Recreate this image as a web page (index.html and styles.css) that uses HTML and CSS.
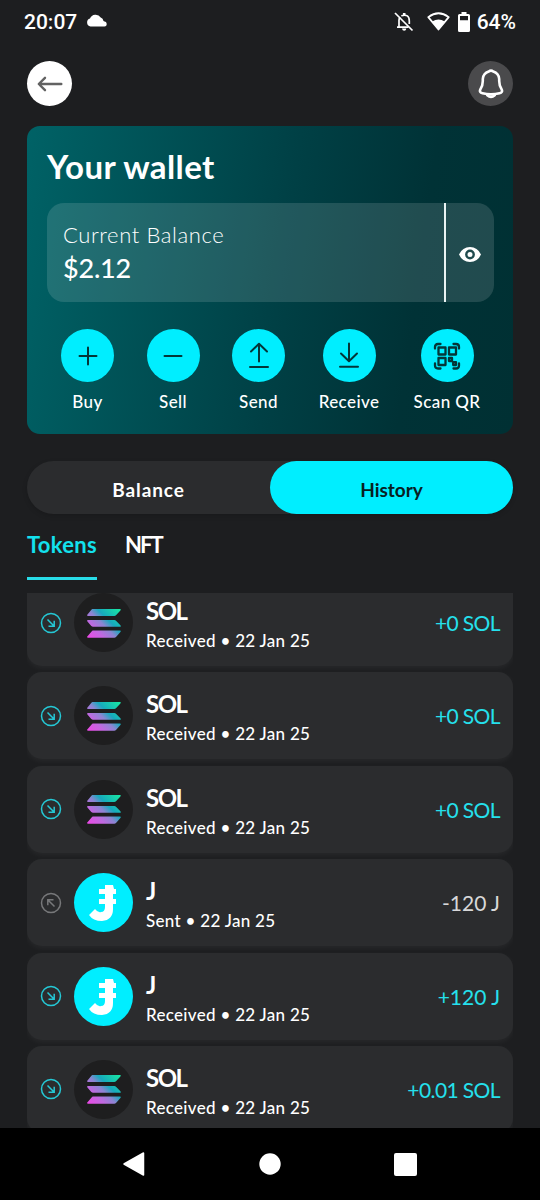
FILE: index.html
```html
<!DOCTYPE html>
<html lang="en">
<head>
    <meta charset="UTF-8">
    <meta name="viewport" content="width=device-width, initial-scale=1.0">
    <title>Your wallet</title>
    <link rel="stylesheet" href="styles.css">
</head>
<body>
    <!-- Shared icons -->
    <svg class="sprite" width="0" height="0">
        <defs>
            <linearGradient id="solGradient" gradientUnits="userSpaceOnUse" x1="3" y1="31" x2="33" y2="1">
                <stop offset="0" stop-color="#ee48e6"/>
                <stop offset="0.28" stop-color="#c069e0"/>
                <stop offset="0.48" stop-color="#8a86d2"/>
                <stop offset="0.64" stop-color="#17a9bd"/>
                <stop offset="1" stop-color="#18e6a4"/>
            </linearGradient>
        </defs>
        <symbol id="sol" viewBox="0 0 36 30">
            <path fill="url(#solGradient)" d="M6.4 1H33.6Q35.6 1 34.4 2.4L30 7.2Q29.3 8 28.3 8H2.2Q.3 8 1.5 6.6L5.4 1.8Q5.9 1 6.4 1ZM2.2 12H28.3Q29.3 12 30 12.8L34.4 17.3Q35.6 18.8 33.6 18.8H7Q6 18.8 5.3 18L1.4 13.4Q.3 12 2.2 12ZM6.8 22.5H33.6Q35.6 22.5 34.4 23.9L30 28.9Q29.3 29.7 28.3 29.7H2.2Q.3 29.7 1.5 28.3L5.8 23.2Q6.3 22.5 6.8 22.5Z"/>
        </symbol>
        <symbol id="jcoin" viewBox="0 0 59 59">
            <path fill="#fff" d="M31 12H39L40 16H42V21H39V26H42V31H39V36Q39 47 28 48Q19 48 15 42L21 36Q24 40 27 39Q31 39 31 34V31H25V26H31V21H25V16H31Z"/>
        </symbol>
        <symbol id="in" viewBox="0 0 22 22">
            <circle cx="11" cy="11" r="9.5"/>
            <path d="M7.5 7.5L14 14M14.2 8.8V14.2H8.5"/>
        </symbol>
        <symbol id="out" viewBox="0 0 22 22">
            <circle cx="11" cy="11" r="9.5"/>
            <path d="M14.5 14.5L8 8M7.8 13.2V7.8H13.5"/>
        </symbol>
    </svg>

    <div class="status-bar">
        <div class="status-left">
            <span>20:07</span>
            <svg width="22" height="13" viewBox="0 0 22 13"><path fill="#fff" d="M4.5 12.4A4 4 0 0 1 4 4.6A6 6 0 0 1 14.7 3.6A4.5 4.5 0 0 1 17.5 7A2.8 2.8 0 0 1 17.8 12.4Z M16 7.4H18A2.5 2.5 0 0 1 18.4 12.4H16Z"/></svg>
        </div>
        <div class="status-right">
            <svg class="mute" width="20" height="20" viewBox="0 0 20 20" fill="none" stroke="#fff" stroke-width="1.7">
                <path d="M1 1L18.5 18.5"/>
                <path d="M5 15V8.2Q5 6.6 6 5.3M3 15.2H14.5M7.3 3.8Q15.3 1.4 15.3 9V12"/>
                <path d="M10.2 1V3.5" stroke-width="2.6"/>
                <path fill="#fff" stroke="none" d="M8 16.5H12.4Q12 18.8 10.2 18.8Q8.4 18.8 8 16.5Z"/>
            </svg>
            <svg class="wifi" width="23" height="20" viewBox="0 0 23 20">
                <path d="M1.3 5.1Q11.5 -2.6 21.7 5.1L11.5 17.5Z" fill="none" stroke="#fff" stroke-width="1.8" stroke-linejoin="round"/>
                <path d="M5.2 9.4Q11.5 5.6 17.8 9.4L11.5 17.5Z" fill="#fff"/>
            </svg>
            <svg class="battery" width="12" height="20" viewBox="0 0 12 20">
                <path fill="#fff" fill-rule="evenodd" d="M3.5 0H8.5V2H10.5Q12 2 12 3.5V18.5Q12 20 10.5 20H1.5Q0 20 0 18.5V3.5Q0 2 1.5 2H3.5ZM2 4V8.3H10V4Z"/>
            </svg>
            <span>64%</span>
        </div>
    </div>

    <div class="header">
        <button class="back-btn">
            <svg width="26" height="16" viewBox="0 0 26 16" fill="none" stroke="#626262" stroke-width="2.4" stroke-linecap="round" stroke-linejoin="round"><path d="M24.3 8H2M8 1.8L1.8 8L8 14.2"/></svg>
        </button>
        <button class="bell-btn">
            <svg width="26" height="32" viewBox="0 0 26 32" fill="none" stroke="#fff" stroke-width="2.6" stroke-linecap="round" stroke-linejoin="round">
                <path d="M4.8 13V11Q5.3 5.4 10.7 3.6Q13 1.5 15.3 3.6Q20.7 5.4 21.2 11V13Q21.2 18 23.7 21.5Q25 24.5 21.5 25.3Q13 27.5 4.5 25.3Q1 24.5 2.3 21.5Q4.8 18 4.8 13Z"/>
                <path d="M9.3 27.3Q13 30.5 16.7 27.3"/>
            </svg>
        </button>
    </div>

    <div class="wallet-card">
        <h1>Your wallet</h1>
        <div class="balance-box">
            <div class="balance-info">
                <div class="balance-label">Current Balance</div>
                <div class="balance-value">$2.12</div>
            </div>
            <div class="balance-eye">
                <svg width="22" height="15" viewBox="0 0 22 15"><path fill="#fff" d="M0 7.5Q3.5 0 11 0T22 7.5Q18.5 15 11 15T0 7.5Z"/><circle cx="11" cy="7.5" r="3.7" fill="#fff" stroke="#204b4e" stroke-width="2.4"/></svg>
            </div>
        </div>
        <div class="actions">
            <div class="action">
                <div class="action-icon"><svg width="28" height="28" viewBox="0 0 28 28"><path d="M14 5.5V22.5M5.5 14H22.5"/></svg></div>
                <span>Buy</span>
            </div>
            <div class="action">
                <div class="action-icon"><svg width="28" height="28" viewBox="0 0 28 28"><path d="M5.5 14H22.5"/></svg></div>
                <span>Sell</span>
            </div>
            <div class="action">
                <div class="action-icon"><svg width="28" height="28" viewBox="0 0 28 28"><path d="M14 19.5V2M6 9.5L14 1.8L22 9.5M5 25H23"/></svg></div>
                <span>Send</span>
            </div>
            <div class="action receive">
                <div class="action-icon"><svg width="28" height="28" viewBox="0 0 28 28"><path d="M14 1.5V19M6 11.5L14 19.2L22 11.5M5 24.8H23"/></svg></div>
                <span>Receive</span>
            </div>
            <div class="action scan">
                <div class="action-icon"><svg width="28" height="28" viewBox="0 0 28 28"><path d="M2 6.5V5Q2 2 5 2H7.5M20.5 2H23Q26 2 26 5V6.5M26 21.5V23.5Q26 26.5 23 26.5H20.5M7.5 26.5H5Q2 26.5 2 23.5V21.5M5.5 5.5H12.5V12.5H5.5ZM16 5.5H23V12.5H16ZM5.5 16H12.5V23H5.5ZM16 16H19V19H16ZM20.2 20.2H23V23H20.2ZM19 19L20.5 20.5"/></svg></div>
                <span>Scan QR</span>
            </div>
        </div>
    </div>

    <div class="switch">
        <div class="switch-item">Balance</div>
        <div class="switch-item active">History</div>
    </div>

    <div class="tabs">
        <div class="tab active">Tokens</div>
        <div class="tab nft">NFT</div>
    </div>

    <div class="history">
        <div class="tx">
            <svg class="direction"><use href="#in"/></svg>
            <div class="coin"><svg width="36" height="30"><use href="#sol"/></svg></div>
            <div class="tx-info">
                <div class="tx-name">SOL</div>
                <div class="tx-date">Received • 22 Jan 25</div>
            </div>
            <div class="amount">+0 SOL</div>
        </div>
        <div class="tx">
            <svg class="direction"><use href="#in"/></svg>
            <div class="coin"><svg width="36" height="30"><use href="#sol"/></svg></div>
            <div class="tx-info">
                <div class="tx-name">SOL</div>
                <div class="tx-date">Received • 22 Jan 25</div>
            </div>
            <div class="amount">+0 SOL</div>
        </div>
        <div class="tx">
            <svg class="direction"><use href="#in"/></svg>
            <div class="coin"><svg width="36" height="30"><use href="#sol"/></svg></div>
            <div class="tx-info">
                <div class="tx-name">SOL</div>
                <div class="tx-date">Received • 22 Jan 25</div>
            </div>
            <div class="amount">+0 SOL</div>
        </div>
        <div class="tx sent">
            <svg class="direction"><use href="#out"/></svg>
            <div class="coin j"><svg width="59" height="59"><use href="#jcoin"/></svg></div>
            <div class="tx-info">
                <div class="tx-name">J</div>
                <div class="tx-date">Sent • 22 Jan 25</div>
            </div>
            <div class="amount j-amount">-120 J</div>
        </div>
        <div class="tx">
            <svg class="direction"><use href="#in"/></svg>
            <div class="coin j"><svg width="59" height="59"><use href="#jcoin"/></svg></div>
            <div class="tx-info">
                <div class="tx-name">J</div>
                <div class="tx-date">Received • 22 Jan 25</div>
            </div>
            <div class="amount j-amount">+120 J</div>
        </div>
        <div class="tx">
            <svg class="direction"><use href="#in"/></svg>
            <div class="coin"><svg width="36" height="30"><use href="#sol"/></svg></div>
            <div class="tx-info">
                <div class="tx-name">SOL</div>
                <div class="tx-date">Received • 22 Jan 25</div>
            </div>
            <div class="amount">+0.01 SOL</div>
        </div>
    </div>

    <div class="nav-bar">
        <svg width="22" height="24" viewBox="0 0 22 24"><path fill="#fff" stroke="#fff" stroke-width="1.5" stroke-linejoin="round" d="M1 12L20.5 1V23Z"/></svg>
        <svg width="22" height="22" viewBox="0 0 22 22"><circle cx="11" cy="11" r="10.7" fill="#fff"/></svg>
        <svg width="23" height="23" viewBox="0 0 23 23"><rect width="23" height="23" rx="2" fill="#fff"/></svg>
    </div>
</body>
</html>
```
FILE: styles.css
```css
* {
    box-sizing: border-box;
}
body {
    margin: 0;
    height: 1200px;
    background-color: #1d1e20;
    color: white;
    font-family: Lato, sans-serif;
    display: flex;
    flex-direction: column;
    overflow: hidden;
}
svg {
    display: block;
    flex-shrink: 0;
}
.sprite {
    position: absolute;
}
button {
    border: none;
    padding: 0;
}

/* Status bar */
.status-bar {
    height: 44px;
    padding: 0 24px;
    display: flex;
    justify-content: space-between;
    align-items: center;
    font-family: Roboto, sans-serif;
    font-size: 21px;
    font-weight: 500;
}
.status-left, .status-right {
    display: flex;
    align-items: center;
}
.status-left {
    gap: 9px;
}
.status-left svg {
    margin-top: -3px;
}
.mute {
    margin-right: 13px;
}
.wifi {
    margin-right: 8px;
}
.battery {
    margin-right: 7px;
}

/* Header */
.header {
    margin: 17px 27px 20px;
    display: flex;
    justify-content: space-between;
}
.back-btn, .bell-btn {
    width: 45px;
    height: 45px;
    border-radius: 50%;
    display: flex;
    align-items: center;
    justify-content: center;
    background-color: white;
}
.bell-btn {
    background-color: #4a4a4c;
}

/* Wallet card */
.wallet-card {
    height: 308px;
    margin: 0 27px;
    padding: 19px 19px 0 20px;
    border-radius: 13px;
    background: linear-gradient(98deg, #006266 0%, #004045 52%, #003236 78%, #003033 100%);
}
h1 {
    margin: 0;
    height: 58px;
    line-height: 42px;
    font-size: 33px;
    font-weight: 700;
    letter-spacing: 0.4px;
}
.balance-box {
    height: 99px;
    border-radius: 17px;
    background-color: rgba(255, 255, 255, 0.13);
    display: flex;
}
.balance-info {
    flex: 1;
    padding: 17px 16px;
}
.balance-label {
    font-size: 22px;
    line-height: 29px;
    font-weight: 300;
    letter-spacing: 0.6px;
}
.balance-value {
    margin-top: 2px;
    font-size: 27px;
    line-height: 34px;
    font-weight: 500;
    letter-spacing: -0.2px;
}
.balance-eye {
    width: 50px;
    border-left: 2px solid #e9f3f3;
    display: flex;
    align-items: center;
    justify-content: center;
    padding-top: 3px;
}
.actions {
    margin-top: 27px;
    padding: 0 13px 0 14px;
    display: flex;
    justify-content: space-between;
}
.action {
    width: 53px;
    display: flex;
    flex-direction: column;
    align-items: center;
    font-size: 17px;
    line-height: 22px;
    font-weight: 500;
    letter-spacing: 0.4px;
    white-space: nowrap;
}
.receive {
    width: 63px;
}
.scan {
    width: 68px;
}
.action-icon {
    width: 53px;
    height: 53px;
    margin-bottom: 9px;
    border-radius: 50%;
    background-color: #00eeff;
    display: flex;
    align-items: center;
    justify-content: center;
}
.action-icon path {
    fill: none;
    stroke: #043638;
    stroke-width: 2;
    stroke-linecap: round;
    stroke-linejoin: round;
}
.scan .action-icon path {
    stroke-width: 2.3;
}

/* Balance / History switch */
.switch {
    height: 53px;
    margin: 27px 27px 0;
    border-radius: 27px;
    background-color: #2b2c2e;
    box-shadow: 0 2px 5px rgba(0, 0, 0, 0.15);
    display: flex;
}
.switch-item {
    flex: 1;
    line-height: 57px;
    text-align: center;
    font-size: 19px;
    font-weight: 700;
    letter-spacing: 0.9px;
}
.switch-item.active {
    border-radius: 27px;
    background-color: #00eeff;
    color: #082022;
    letter-spacing: 0;
}

.tabs {
    height: 66px;
    margin: 0 27px 13px;
    display: flex;
    gap: 28px;
}
.tab {
    padding-top: 17px;
    font-size: 22px;
    line-height: 28px;
    font-weight: 700;
    letter-spacing: 0.3px;
}
.tab.active {
    color: #13e1ed;
    border-bottom: 3px solid #28dce8;
}
.tab.nft {
    letter-spacing: -2px;
}

/* Transactions */
.history {
    flex: 1;
    min-height: 0;
    margin: 0 27px;
    overflow: hidden;
}
.tx {
    height: 87px;
    margin-bottom: 6.4px;
    padding: 0 13px;
    border-radius: 15px;
    background-color: #2b2c2e;
    box-shadow: 0 2px 6px rgba(255, 255, 255, 0.05);
    display: flex;
    align-items: center;
}
/* the list is scrolled a little under the tabs */
.tx:first-child {
    margin-top: -14px;
}
.direction {
    width: 22px;
    height: 22px;
    margin-right: 12px;
    fill: none;
    stroke: #25c8d5;
    stroke-width: 1.5;
}
.coin {
    width: 59px;
    height: 59px;
    margin-right: 13px;
    border-radius: 50%;
    background-color: #1e1e1f;
    display: flex;
    align-items: center;
    justify-content: center;
}
.coin.j {
    background-color: #00eeff;
}
.tx-info {
    flex: 1;
    padding-top: 6px;
}
.tx-name {
    font-size: 24px;
    line-height: 30px;
    font-weight: 700;
    letter-spacing: -1.5px;
}
.tx-date {
    font-size: 17px;
    line-height: 29px;
    font-weight: 500;
    letter-spacing: 0.3px;
}
.amount {
    color: #25e0ec;
    font-size: 21px;
    letter-spacing: -0.6px;
}
.j-amount {
    letter-spacing: 0;
}
.sent .direction {
    stroke: #77787a;
}
.sent .amount {
    color: #d8d8d9;
}

/* System navigation */
.nav-bar {
    height: 72px;
    padding: 0 123px;
    background-color: black;
    display: flex;
    align-items: center;
    justify-content: space-between;
}
```
